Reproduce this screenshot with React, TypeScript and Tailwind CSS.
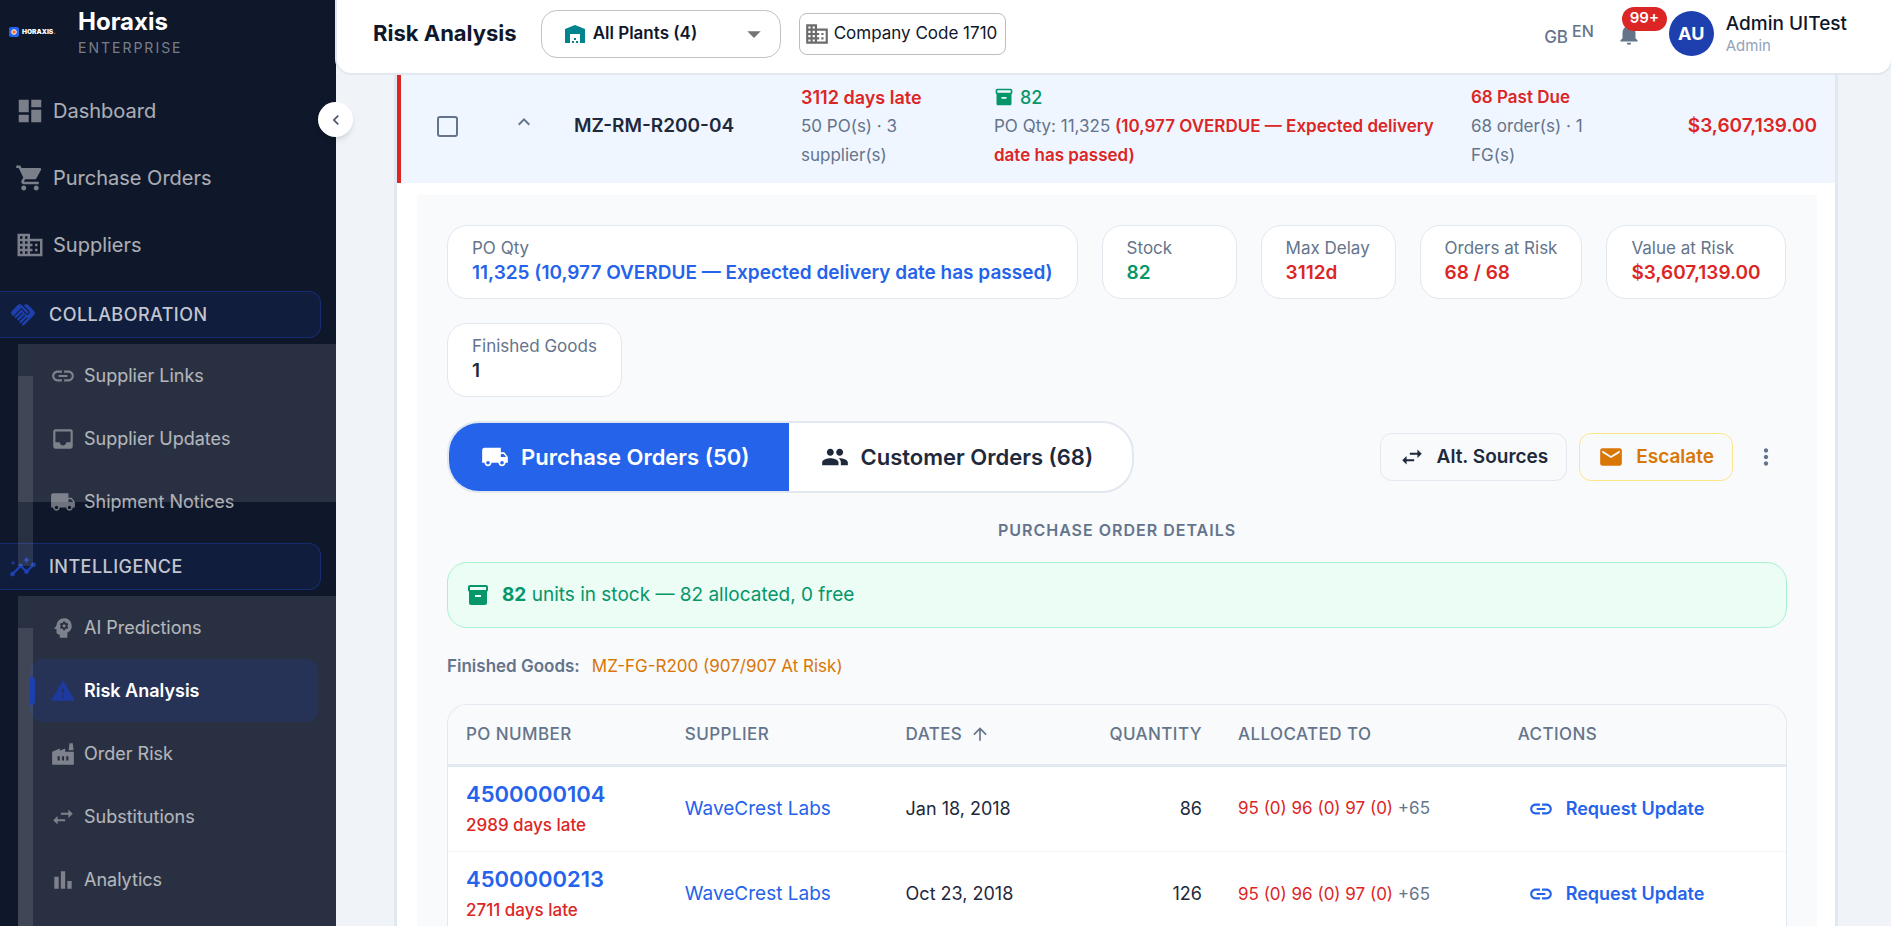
import type { ReactNode } from "react";
import type { IconType } from "react-icons";
import {
  MdArrowDropDown,
  MdArrowUpward,
  MdBarChart,
  MdBusiness,
  MdChevronLeft,
  MdDashboard,
  MdEmail,
  MdFactory,
  MdHandshake,
  MdInbox,
  MdInsights,
  MdInventory2,
  MdKeyboardArrowUp,
  MdLink,
  MdLocalShipping,
  MdMoreVert,
  MdNotifications,
  MdPeople,
  MdPsychology,
  MdShoppingCart,
  MdSwapHoriz,
  MdWarehouse,
  MdWarning,
} from "react-icons/md";

type NavItem = { label: string; icon: IconType; active?: boolean };

const mainNav: NavItem[] = [
  { label: "Dashboard", icon: MdDashboard },
  { label: "Purchase Orders", icon: MdShoppingCart },
  { label: "Suppliers", icon: MdBusiness },
];

const collaborationNav: NavItem[] = [
  { label: "Supplier Links", icon: MdLink },
  { label: "Supplier Updates", icon: MdInbox },
  { label: "Shipment Notices", icon: MdLocalShipping },
];

const intelligenceNav: NavItem[] = [
  { label: "AI Predictions", icon: MdPsychology },
  { label: "Risk Analysis", icon: MdWarning, active: true },
  { label: "Order Risk", icon: MdFactory },
  { label: "Substitutions", icon: MdSwapHoriz },
  { label: "Analytics", icon: MdBarChart },
];

const stats = [
  {
    label: "PO Qty",
    value: "11,325 (10,977 OVERDUE — Expected delivery date has passed)",
    color: "text-[#2563eb]",
  },
  { label: "Stock", value: "82", color: "text-[#059669]" },
  { label: "Max Delay", value: "3112d", color: "text-[#dc2626]" },
  { label: "Orders at Risk", value: "68 / 68", color: "text-[#dc2626]" },
  { label: "Value at Risk", value: "$3,607,139.00", color: "text-[#dc2626]" },
  { label: "Finished Goods", value: "1", color: "text-[#1e293b]" },
];

const orders = [
  { po: "4500000104", late: "2989 days late", date: "Jan 18, 2018", qty: 86 },
  { po: "4500000213", late: "2711 days late", date: "Oct 23, 2018", qty: 126 },
];

const Logo = () => (
  <svg width="50" height="12" viewBox="0 0 50 12" aria-label="Horaxis logo">
    <rect x="1" y="1" width="10" height="10" rx="2" fill="#2563eb" />
    <circle cx="6" cy="6" r="2.3" fill="#f97316" stroke="#fff" strokeWidth="1" />
    <text
      x="14"
      y="8"
      fontSize="6.6"
      fontWeight="900"
      fill="#fff"
      fontFamily="Inter, sans-serif"
    >
      HORAXIS<tspan fill="#ea580c">.</tspan>
    </text>
  </svg>
);

const SectionHeader = ({
  icon: Icon,
  children,
}: {
  icon: IconType;
  children: ReactNode;
}) => (
  <button className="-ml-4 flex h-[47px] w-[337px] items-center gap-3 rounded-xl border border-[#1e40af]/45 bg-[#1e40af]/15 pl-6 text-left text-lg font-medium tracking-wide text-white/75">
    <Icon className="size-7 shrink-0 text-[#1e40af]" />
    {children}
  </button>
);

const SubNav = ({
  items,
  wash,
  rail,
}: {
  items: NavItem[];
  wash: string;
  rail: string;
}) => (
  <div className="relative pt-1.5">
    <div
      className={`pointer-events-none absolute left-[18px] right-0 top-1.5 bg-white/11 ${wash}`}
    />
    <div
      className={`pointer-events-none absolute left-[18px] top-[38px] z-10 w-[15px] bg-white/11 ${rail}`}
    />
    <ul className="relative">
      {items.map(({ label, icon: Icon, active }) => (
        <li key={label} className="relative ml-[30px] mr-[18px]">
          <a
            href="#"
            className={`flex h-[63px] items-center gap-2 rounded-xl pl-5 text-lg ${
              active ? "bg-[#1e40af]/20 font-semibold text-white" : "text-white/65"
            }`}
          >
            <Icon
              className={`size-[26px] shrink-0 ${
                active ? "text-[#1e3a9f]" : "text-white/40"
              }`}
            />
            {label}
          </a>
          {active && (
            <span className="absolute left-0 top-[18px] z-20 h-7 w-[5px] rounded-r bg-[#1e40af]" />
          )}
        </li>
      ))}
    </ul>
  </div>
);

const Sidebar = () => (
  <aside className="relative z-30 w-[336px] shrink-0 bg-[#0f172a]">
    <div className="h-screen overflow-hidden">
      <div className="flex h-[77px] items-start pl-2">
        <div className="pt-[26px]">
          <Logo />
        </div>
        <div className="ml-5 pt-1.5">
          <p className="text-2xl/8 font-bold text-white">Horaxis</p>
          <p className="text-sm/5 tracking-[2px] text-white/45">ENTERPRISE</p>
        </div>
      </div>
      <nav>
        {mainNav.map(({ label, icon: Icon }) => (
          <a
            key={label}
            href="#"
            className="flex h-[67px] items-center gap-2 pl-[15px] text-xl text-white/65"
          >
            <Icon className="size-[30px] text-white/45" />
            {label}
          </a>
        ))}
        <div className="mt-[13px]">
          <SectionHeader icon={MdHandshake}>COLLABORATION</SectionHeader>
        </div>
        <SubNav items={collaborationNav} wash="h-[158px]" rail="h-[190px]" />
        <div className="mt-[10px]">
          <SectionHeader icon={MdInsights}>INTELLIGENCE</SectionHeader>
        </div>
        <SubNav items={intelligenceNav} wash="h-[600px]" rail="h-[600px]" />
      </nav>
    </div>
    <button
      aria-label="Collapse sidebar"
      className="absolute -right-[17px] top-[102px] flex size-[35px] items-center justify-center rounded-full bg-white text-slate-600 shadow-md"
    >
      <MdChevronLeft className="size-5" />
    </button>
  </aside>
);

const Header = () => (
  <header className="relative z-40 -ml-px -mr-0.5 flex h-[75px] items-center rounded-b-2xl border-2 border-t-0 border-[#e2e8f0] bg-white pb-1.5 pl-9 pr-11">
    <h1 className="text-[22px] font-bold text-[#0f172a]">Risk Analysis</h1>
    <button className="ml-6 flex h-12 w-60 items-center rounded-2xl border border-[#c0c3c8] pl-[21px] pr-2.5 text-[17px] font-semibold text-[#0f172a]">
      <MdWarehouse className="mr-1.5 size-6 text-[#00838f]" />
      All Plants (4)
      <MdArrowDropDown className="ml-auto size-8 text-[#757575]" />
    </button>
    <button className="ml-[18px] flex h-[42px] items-center gap-1 rounded-lg border border-[#bdbdbd] pl-1 pr-2 text-[17px] text-[#0f172a]">
      <MdBusiness className="size-[26px] text-[#6b6b6b]" />
      Company Code 1710
    </button>
    <div className="ml-auto flex items-center">
      <button className="flex gap-1 font-medium text-[#64748b]">
        <span className="pt-1.5 text-[17px]/6">GB</span>
        <span className="text-base/6">EN</span>
      </button>
      <button aria-label="Notifications" className="relative ml-[22px] text-[#64748b]">
        <MdNotifications className="size-[26px]" />
        <span className="absolute -top-3.5 left-1.5 flex h-6 items-center rounded-full bg-[#dc2626] px-2 text-[15px] font-semibold text-white">
          99+
        </span>
      </button>
      <div className="ml-[27px] flex size-[45px] items-center justify-center rounded-full bg-[#1e40af] text-lg font-bold text-white">
        AU
      </div>
      <div className="ml-3">
        <p className="text-[19px]/6 font-medium text-[#0f172a]">Admin UITest</p>
        <p className="text-[15px]/5 text-[#94a3b8]">Admin</p>
      </div>
    </div>
  </header>
);

const MaterialRow = () => (
  <div className="flex h-[114px] items-center border-l-4 border-[#dc2626] bg-[#eff6ff] pr-[18px]">
    <input
      type="checkbox"
      aria-label="Select MZ-RM-R200-04"
      className="ml-9 size-[21px] appearance-none rounded-[3px] border-2 border-[#64748b]"
    />
    <button aria-label="Collapse row" className="ml-[54px] pb-2 text-[#64748b]">
      <MdKeyboardArrowUp className="size-6" />
    </button>
    <p className="ml-[38px] w-[227px] text-[19px] font-semibold text-[#1e293b]">
      MZ-RM-R200-04
    </p>
    <div className="w-[193px] text-[17px]/[29px] text-[#64748b]">
      <p className="text-lg/[29px] font-semibold text-[#dc2626]">3112 days late</p>
      <p className="w-32">50 PO(s) · 3 supplier(s)</p>
    </div>
    <div className="w-[477px] text-[17px]/[29px] text-[#64748b]">
      <p className="flex items-center gap-1.5 text-lg/[29px] font-medium text-[#059669]">
        <MdInventory2 className="size-5" />
        82
      </p>
      <p className="w-[460px]">
        PO Qty: 11,325{" "}
        <b className="font-semibold text-[#dc2626]">
          (10,977 OVERDUE — Expected delivery date has passed)
        </b>
      </p>
    </div>
    <div className="w-32 text-[17px]/[29px] text-[#64748b]">
      <p className="font-semibold text-[#dc2626]">68 Past Due</p>
      <p>68 order(s) · 1 FG(s)</p>
    </div>
    <p className="ml-auto text-[19px] font-semibold text-[#dc2626]">$3,607,139.00</p>
  </div>
);

const Stats = () => (
  <div className="flex flex-wrap gap-6">
    {stats.map((s) => (
      <div
        key={s.label}
        className="min-w-[135px] rounded-[20px] border border-[#e2e8f0] bg-white px-6 pb-3 pt-2.5"
      >
        <p className="text-[17px]/6 text-[#64748b]">{s.label}</p>
        <p className={`text-[19px]/[26px] font-semibold ${s.color}`}>{s.value}</p>
      </div>
    ))}
  </div>
);

const Toolbar = () => (
  <div className="mt-6 flex items-center">
    <div className="flex h-[72px] overflow-hidden rounded-[32px] border-2 border-[#e2e8f0] bg-white text-[22px] font-semibold">
      <button className="flex items-center gap-3 bg-[#2563eb] pl-8 pr-[39px] text-white">
        <MdLocalShipping className="size-7" />
        Purchase Orders (50)
      </button>
      <button className="flex items-center gap-3 pl-8 pr-[39px] text-[#1e293b]">
        <MdPeople className="size-7" />
        Customer Orders (68)
      </button>
    </div>
    <div className="ml-auto flex items-center gap-3">
      <button className="flex h-12 items-center gap-3 rounded-xl border border-[#e2e8f0] px-[18px] text-[19px] font-semibold text-[#1e293b]">
        <MdSwapHoriz className="size-[26px]" />
        Alt. Sources
      </button>
      <button className="flex h-12 items-center gap-3 rounded-xl border border-[#fde68a] px-[18px] text-[19px] font-semibold text-[#d97706]">
        <MdEmail className="size-[26px]" />
        Escalate
      </button>
      <button aria-label="More actions" className="px-2 text-[#64748b]">
        <MdMoreVert className="size-[26px]" />
      </button>
    </div>
  </div>
);

const th = "h-[60px] text-left font-medium";

const OrdersTable = () => (
  <div className="mt-[26px] overflow-hidden rounded-t-[20px] border border-b-0 border-[#e2e8f0] bg-white">
    <table className="w-full table-fixed text-[#1e293b]">
      <colgroup>
        <col className="w-[17.7%]" />
        <col className="w-[16.5%]" />
        <col className="w-[12.2%]" />
        <col className="w-[11.3%]" />
        <col className="w-[20.9%]" />
        <col />
      </colgroup>
      <thead>
        <tr className="border-b-3 border-[#e2e8f0] bg-[#f8fafc] text-[17px] tracking-wide text-[#64748b]">
          <th className={`${th} pl-[18px]`}>PO NUMBER</th>
          <th className={th}>SUPPLIER</th>
          <th className={th}>
            <span className="flex items-center gap-2">
              DATES <MdArrowUpward className="size-5" />
            </span>
          </th>
          <th className="h-[60px] pr-[18px] text-right font-medium">QUANTITY</th>
          <th className={`${th} pl-[18px]`}>ALLOCATED TO</th>
          <th className={`${th} pl-[18px]`}>ACTIONS</th>
        </tr>
      </thead>
      <tbody>
        {orders.map((o) => (
          <tr key={o.po} className="h-[86px] border-b border-[#f1f5f9] text-lg">
            <td className="pl-[18px]">
              <a href="#" className="block text-[22px]/8 font-semibold text-[#2563eb]">
                {o.po}
              </a>
              <p className="text-[17px]/[30px] font-medium text-[#dc2626]">{o.late}</p>
            </td>
            <td>
              <a href="#" className="text-[19px] text-[#2563eb]">
                WaveCrest Labs
              </a>
            </td>
            <td>{o.date}</td>
            <td className="pr-[18px] text-right">{o.qty}</td>
            <td className="pl-[18px] text-[17px] text-[#64748b]">
              <span className="text-[#dc2626]">95 (0) 96 (0) 97 (0)</span> +65
            </td>
            <td className="pl-[18px]">
              <button className="flex items-center gap-3 pl-2.5 font-semibold text-[#2563eb]">
                <MdLink className="size-[26px]" />
                Request Update
              </button>
            </td>
          </tr>
        ))}
      </tbody>
    </table>
  </div>
);

const DetailPanel = () => (
  <section className="ml-5 mr-[18px] mt-3 bg-[#f8fafc] px-[30px] pt-[30px]">
    <Stats />
    <Toolbar />
    <h2 className="mt-[25px] text-center text-base font-semibold tracking-[1px] text-[#64748b]">
      PURCHASE ORDER DETAILS
    </h2>
    <div className="mt-5 flex h-[66px] items-center rounded-[20px] border border-[#a7f3d0] bg-[#ecfdf5] px-[18px] text-[19px] text-[#059669]">
      <MdInventory2 className="mr-3 size-6" />
      <p>
        <b>82</b> units in stock — 82 allocated, 0 free
      </p>
    </div>
    <p className="mt-[26px] text-[17px]/6 font-semibold text-[#64748b]">
      Finished Goods:
      <span className="ml-3 font-normal text-[#d97706]">
        MZ-FG-R200 (907/907 At Risk)
      </span>
    </p>
    <OrdersTable />
  </section>
);

export default function App() {
  return (
    <div className="flex h-screen overflow-hidden bg-[#f0f4f8] font-['Inter',sans-serif]">
      <Sidebar />
      <div className="min-w-0 flex-1">
        <Header />
        <main className="-mt-1.5 ml-[58px] mr-[53px] border-x-3 border-[#e2e8f0] bg-white">
          <MaterialRow />
          <DetailPanel />
        </main>
      </div>
    </div>
  );
}
